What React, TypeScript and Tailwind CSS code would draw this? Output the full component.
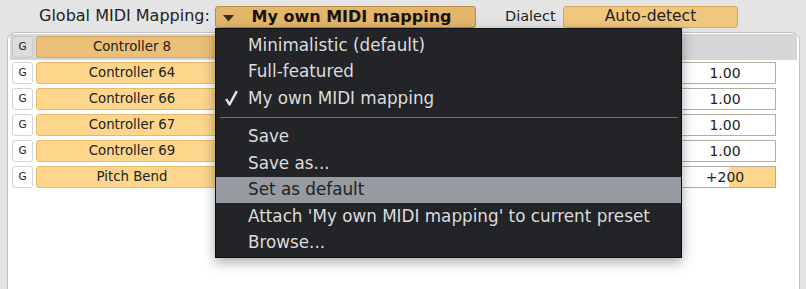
import React from "react";

const rows = [
  { label: "Controller 8", value: null as string | null, selected: true },
  { label: "Controller 64", value: "1.00" },
  { label: "Controller 66", value: "1.00" },
  { label: "Controller 67", value: "1.00" },
  { label: "Controller 69", value: "1.00" },
  { label: "Pitch Bend", value: "+200", bipolar: true },
];

const menuItems: { label?: string; checked?: boolean; sep?: boolean; hl?: boolean }[] = [
  { label: "Minimalistic (default)" },
  { label: "Full-featured" },
  { label: "My own MIDI mapping", checked: true },
  { sep: true },
  { label: "Save" },
  { label: "Save as..." },
  { label: "Set as default", hl: true },
  { label: "Attach 'My own MIDI mapping' to current preset" },
  { label: "Browse..." },
];

export default function App() {
  return (
    <div
      className="relative w-[806px] h-[289px] overflow-hidden bg-[#e4e4e4] text-[#222]"
      style={{ fontFamily: '"DejaVu Sans", Verdana, sans-serif' }}
    >
      {/* top bar */}
      <div className="flex items-center h-[32px] pl-[39px]">
        <span className="w-[170px] text-[16px] leading-none whitespace-nowrap">Global MIDI Mapping:</span>
        <div className="ml-[6px] mt-[2px] w-[261px] h-[22px] rounded-[3px] border border-[#b88c45] bg-[#e3b66b] flex items-center relative">
          <svg className="absolute left-[7px] top-[8px]" width="11" height="7" viewBox="0 0 11 7">
            <path d="M0 0 L11 0 L5.5 6.5 Z" fill="#3b2c14" />
          </svg>
          <span className="w-full text-center pl-[12px] text-[16px] font-bold leading-none text-[#1a1208]">
            My own MIDI mapping
          </span>
        </div>
        <span className="ml-[29px] w-[52px] text-[14.5px] leading-none whitespace-nowrap">Dialect</span>
        <div className="ml-[6px] mt-[2px] w-[175px] h-[22px] rounded-[3px] border border-[#d6a85e] bg-[#f1c77d] flex items-center justify-center text-[15.5px] leading-none">
          Auto-detect
        </div>
      </div>

      {/* panel */}
      <div className="ml-[7px] w-[793px] h-[270px] border border-[#c2c2c2] rounded-t-[8px] bg-white px-[2px] pt-[1px]">
        {rows.map((r, i) => (
          <div
            key={i}
            className={`flex items-center h-[26px] pl-[2px] pr-[21px] ${r.selected ? "bg-[#d6d6d6]" : ""}`}
          >
            <div
              className={`w-[21px] h-[22px] rounded-[3px] border flex items-center justify-center text-[10.5px] ${
                r.selected ? "bg-[#dcdcdc] border-[#c8c8c8]" : "bg-white border-[#d4d4d4]"
              }`}
            >
              G
            </div>
            <div
              className={`ml-[3px] w-[192px] h-[22px] rounded-[3px] border flex items-center justify-center text-[13.3px] ${
                r.selected ? "bg-[#ebbf77] border-[#d7a860]" : "bg-[#fdd68c] border-[#e8b869]"
              }`}
            >
              {r.label}
            </div>
            {r.value && (
              <div className="ml-auto relative w-[102px] h-[22px] border border-[#b6aca0] bg-white flex items-center justify-center text-[14px]">
                {r.bipolar && <div className="absolute left-[54px] right-0 top-0 bottom-0 bg-[#fdd68c]" />}
                <span className="relative">{r.value}</span>
              </div>
            )}
          </div>
        ))}
      </div>

      {/* dropdown menu */}
      <div className="absolute left-[215px] top-[28px] w-[467px] h-[230px] bg-[#232428] border border-[#0e0e10] pt-[3px] shadow-[0_4px_12px_rgba(0,0,0,0.35)]">
        {menuItems.map((m, i) =>
          m.sep ? (
            <div key={i} className="h-[12px] flex items-center pl-[4px] pr-[3px]">
              <div className="w-full h-px bg-[#6e6f73]" />
            </div>
          ) : (
            <div
              key={i}
              className={`relative h-[26.5px] flex items-center pl-[32px] text-[16.8px] leading-none whitespace-nowrap ${
                m.hl ? "bg-[#959ba1] text-[#222]" : "text-[#dcdcdc]"
              }`}
            >
              {m.checked && (
                <svg className="absolute left-[9px] top-[5px]" width="13" height="16" viewBox="0 0 13 16">
                  <path d="M1.2 9 L4.5 14.5 L11.8 1.2" stroke="#e8e8e8" strokeWidth="2.4" fill="none" strokeLinejoin="round" />
                </svg>
              )}
              {m.label}
            </div>
          )
        )}
      </div>
    </div>
  );
}
